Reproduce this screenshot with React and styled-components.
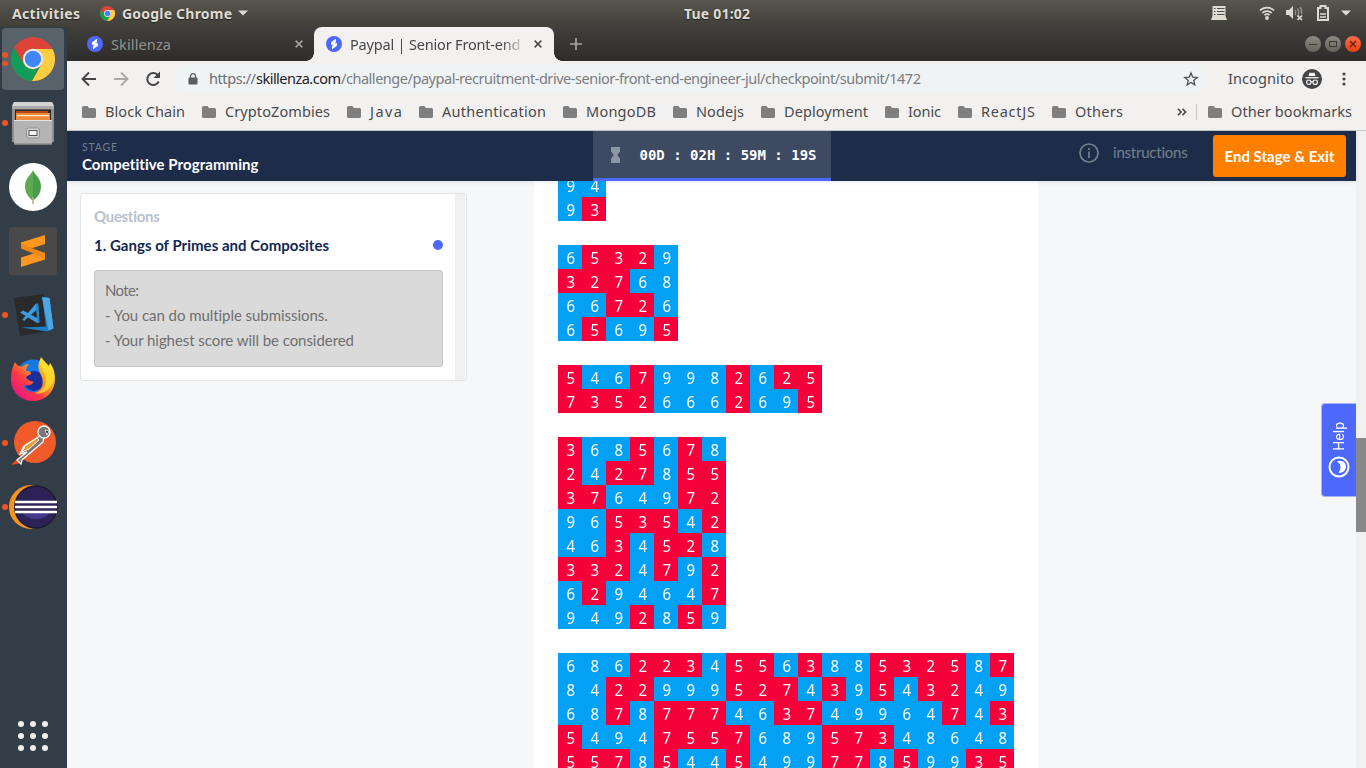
import React, { useLayoutEffect, useRef } from "react";
import styled, { createGlobalStyle, css } from "styled-components";

const Global = createGlobalStyle`
  * { box-sizing: border-box; }
  html, body { margin: 0; height: 100%; overflow: hidden; }
  body { font-family: "Noto Sans", "Open Sans", sans-serif; }
`;

const ui = `"Noto Sans", "Open Sans", sans-serif`;
const rounded = `Lato, "Noto Sans", sans-serif`;

/* ---------- text that spreads over a set measure ---------- */

const Measure = styled.span`
  display: block;
  flex: none;
  width: ${(p) => p.$w}px;
  white-space: nowrap;
  font-family: ${(p) => p.$font || ui};
  font-size: ${(p) => p.$size || 14.5}px;
  font-weight: ${(p) => p.$weight || 400};
  color: ${(p) => p.$color || "inherit"};
`;

function Label({ w, size, weight, color, font, children }) {
  const ref = useRef(null);
  useLayoutEffect(() => {
    const el = ref.current;
    el.style.letterSpacing = "0px";
    const natural = el.getBoundingClientRect().width;
    el.style.letterSpacing = `${(w - natural) / Math.max(1, children.length - 1)}px`;
  }, [w, children]);
  return (
    <Measure $w={w} $size={size} $weight={weight} $color={color} $font={font}>
      <span ref={ref}>{children}</span>
    </Measure>
  );
}

/* ---------- desktop ---------- */

const Desktop = styled.div`
  width: 1366px;
  height: 768px;
  display: flex;
  flex-direction: column;
  overflow: hidden;
`;

const TopBar = styled.header`
  height: 27px;
  flex: none;
  display: flex;
  align-items: center;
  padding: 0 15px 1px 12px;
  color: #dfdbd2;
  text-shadow: 0 1px 1px rgba(0, 0, 0, 0.6);
  background: linear-gradient(#59564d, #403f39);
  svg { flex: none; }
`;

const AppMenu = styled.div`
  display: flex;
  align-items: center;
  margin-left: 20px;
  width: 584px;
`;

const Tray = styled.div`
  margin-left: auto;
  display: flex;
  align-items: center;
`;

const Body = styled.div`
  flex: 1;
  min-height: 0;
  display: flex;
`;

const Dock = styled.nav`
  width: 67px;
  flex: none;
  display: flex;
  flex-direction: column;
  background: #333d47;
`;

const DockItem = styled.div`
  height: 64px;
  width: 67px;
  padding: 1px 3px 1px 2px;
  display: grid;
  position: relative;
`;

const Tile = styled.div`
  display: grid;
  place-items: center;
  height: 62px;
  width: 62px;
  border-radius: 4px;
  background: ${(p) => (p.$active ? "#58626b" : "transparent")};
`;

const Marks = styled.div`
  position: absolute;
  left: 2px;
  top: 0;
  height: 64px;
  display: flex;
  flex-direction: column;
  justify-content: center;
  gap: 3px;
  i {
    width: 5.500px;
    height: 5.500px;
    border-radius: 50%;
    background: #e95420;
  }
`;

const AppsGrid = styled.div`
  margin: auto 0 17px 18px;
  display: grid;
  grid-template-columns: repeat(3, 6px);
  gap: 6px;
  i {
    height: 6px;
    border-radius: 50%;
    background: #eeeeec;
  }
`;

/* ---------- browser ---------- */

const Browser = styled.div`
  flex: 1;
  min-width: 0;
  display: flex;
  flex-direction: column;
`;

const TabStrip = styled.div`
  height: 34px;
  flex: none;
  display: flex;
  align-items: center;
  background: linear-gradient(#3f3e3b, #2e2d2c);
`;

const Tab = styled.div`
  height: 34px;
  display: flex;
  align-items: center;
  position: relative;
  padding-bottom: 1px;
  width: ${(p) => (p.$active ? 240 : 247)}px;
  padding-left: ${(p) => (p.$active ? 12 : 20)}px;
  color: ${(p) => (p.$active ? "#47474a" : "#93918d")};
  ${(p) =>
    p.$active &&
    css`
      background: #f2f1f0;
      border-radius: 8px 8px 0 0;
      &::before, &::after {
        content: "";
        position: absolute;
        bottom: 0;
        width: 8px;
        height: 8px;
      }
      &::before {
        left: -8px;
        background: radial-gradient(circle at 0 0, transparent 7.5px, #f2f1f0 8px);
      }
      &::after {
        right: -8px;
        background: radial-gradient(circle at 100% 0, transparent 7.5px, #f2f1f0 8px);
      }
    `}
`;

const TabTitle = styled.div`
  width: ${(p) => p.$w}px;
  margin-left: 8px;
  overflow: hidden;
  ${(p) => p.$fade && "mask-image: linear-gradient(90deg, #000 86%, transparent);"}
`;

const WindowButtons = styled.div`
  margin-left: auto;
  margin-right: 5px;
  display: flex;
  gap: 4px;
`;

const RoundButton = styled.div`
  width: 16px;
  height: 16px;
  border-radius: 50%;
  display: grid;
  place-items: center;
  background: ${(p) => (p.$close ? "linear-gradient(#fa6c4c, #ec3f0b)" : "linear-gradient(#8b8a80, #64635c)")};
`;

const Toolbar = styled.div`
  height: 36px;
  flex: none;
  display: flex;
  align-items: center;
  background: #f2f1f0;
  padding-left: 14px;
  svg { flex: none; }
`;

const Omnibox = styled.div`
  margin-left: 13px;
  width: 1034px;
  height: 28px;
  border-radius: 14px;
  background: #eff3f4;
  display: flex;
  align-items: center;
  padding: 0 0 1px 14px;
  > span { padding-bottom: 2px; }
`;

const Profile = styled.div`
  display: flex;
  align-items: center;
  gap: 8px;
  margin-left: 20px;
  > span { padding-bottom: 2px; }
`;

const Bookmarks = styled.div`
  height: 34px;
  flex: none;
  display: flex;
  align-items: center;
  background: #f2f1f0;
  border-bottom: 1px solid #c9cac5;
  padding: 0 0 4px 15px;
  color: #4a4a4c;
  svg { flex: none; }
`;

const Bookmark = styled.div`
  flex: none;
  display: flex;
  align-items: center;
  gap: 9px;
  margin-right: 17px;
  > span { padding-bottom: 2px; }
`;

const Divider = styled.div`
  flex: none;
  width: 1px;
  height: 16px;
  margin: 0 11px 0 9px;
  background: #c8c7c5;
`;

/* ---------- page ---------- */

const Viewport = styled.div`
  flex: 1;
  min-height: 0;
  display: flex;
  position: relative;
`;

const Page = styled.div`
  width: 1289px;
  display: flex;
  flex-direction: column;
  background: #f6f7f9;
`;

const Scrollbar = styled.div`
  width: 10px;
  background: #f1f1f1;
  padding-top: 307px;
`;

const Thumb = styled.div`
  height: 94px;
  background: #888;
`;

const StageBar = styled.div`
  height: 50px;
  flex: none;
  display: flex;
  background: #1c2c49;
  box-shadow: 0 1px 4px rgba(28, 44, 73, 0.12);
  z-index: 1;
`;

const StageName = styled.div`
  width: 526px;
  padding: 9px 0 0 15px;
  line-height: 14px;
  > :last-child { line-height: 20px; }
`;

const Timer = styled.div`
  width: 238px;
  height: 50px;
  display: flex;
  align-items: center;
  padding-left: 18px;
  background: #3e4a62;
  border-bottom: 3px solid #4d69fb;
  font: bold 14px "DejaVu Sans Mono", monospace;
  color: #fff;
  white-space: pre;
  svg { margin-right: 19.500px; }
`;

const Instructions = styled.div`
  display: flex;
  align-items: center;
  gap: 14px;
  margin-left: 248px;
  padding-bottom: 7px;
  > span { padding-bottom: 2px; }
`;

const EndButton = styled.div`
  margin: 4px 10px 0 auto;
  width: 133px;
  height: 42px;
  border-radius: 3px;
  display: grid;
  place-items: center;
  background: #ff8000;
  > span { padding-bottom: 1px; }
`;

const Columns = styled.div`
  flex: 1;
  min-height: 0;
  display: flex;
  align-items: flex-start;
`;

const Questions = styled.aside`
  margin: 12px 0 0 13px;
  width: 387px;
  height: 188px;
  display: flex;
  background: #fff;
  border: 1px solid #e2e3e5;
  border-radius: 3px;
`;

const QuestionList = styled.div`
  width: 374px;
  padding: 10px 12px 0 13px;
`;

const InnerTrack = styled.div`
  width: 10px;
  background: #f0f0f0;
`;

const QuestionRow = styled.div`
  height: 28px;
  display: flex;
  align-items: center;
  justify-content: space-between;
  padding-bottom: ${(p) => p.$lift || 0}px;
`;

const StatusDot = styled.i`
  width: 10px;
  height: 10px;
  border-radius: 50%;
  background: #4d69fb;
`;

const Note = styled.div`
  margin-top: 10px;
  width: 349px;
  height: 97px;
  padding: 7px 10px;
  line-height: 25px;
  color: #6f6f6f;
  background: #dadada;
  border: 1px solid #c6c6c6;
  border-radius: 3px;
`;

const Statement = styled.main`
  margin-left: 67px;
  width: 504px;
  height: 587px;
  padding-left: 24px;
  background: #fff;
  overflow: hidden;
`;

const Grids = styled.div`
  margin-top: -8px;
  display: flex;
  flex-direction: column;
  gap: 24px;
`;

const Grid = styled.div`
  display: grid;
  grid-template-columns: repeat(${(p) => p.$cols}, 24px);
  grid-auto-rows: 24px;
`;

const Cell = styled.div`
  background: ${(p) => (p.$prime ? "#f50039" : "#03a1f5")};
  color: #fff;
  font: 16.500px/26px "Noto Sans", sans-serif;
  text-align: center;
  padding-left: 1px;
`;

const Digit = styled.span`
  display: inline-block;
  transform: scaleX(0.91);
`;

const Help = styled.div`
  position: absolute;
  right: 10px;
  top: 272px;
  width: 35px;
  height: 94px;
  border: 1px solid #a9b6fa;
  border-right: 0;
  border-radius: 4px 0 0 4px;
  background: #4d69fb;
  display: flex;
  flex-direction: column;
  align-items: center;
  justify-content: center;
  gap: 6px;
  color: #fff;
`;

const VerticalText = styled.span`
  writing-mode: vertical-rl;
  transform: rotate(180deg);
  font: 14px/18px Roboto, sans-serif;
`;

/* ---------- icons ---------- */

const ChromeLogo = ({ s }) => (
  <svg width={s} height={s} viewBox="0 0 44 44">
    <circle cx="22" cy="22" r="22" fill="#db4437" />
    <path d="M3 11A22 22 0 0 0 21 44l9.500-17A10 10 0 0 1 13 27z" fill="#0f9d58" />
    <path d="M22 12h19.600A22 22 0 0 1 21 44l9.800-17.200A10 10 0 0 0 22 12z" fill="#ffcd40" />
    <circle cx="22" cy="22" r="10.200" fill="#f1f1f1" />
    <circle cx="22" cy="22" r="8.200" fill="#4285f4" />
  </svg>
);

const Cabinet = () => (
  <svg width="44" height="46" viewBox="0 0 44 46">
    <path d="M3 2h38l2 4v36H1V6z" fill="#8f8f8f" />
    <path d="M3 2h38l2 4H1z" fill="#d4d4d4" />
    <path d="M1 6h42v3H1z" fill="#aaa" />
    <rect x="4" y="9.500" width="36" height="12" fill="#2c2723" />
    <rect x="5" y="11" width="32" height="4" fill="#b5481c" />
    <rect x="5" y="13" width="34" height="7" fill="#ec8a38" />
    <rect x="6" y="15" width="32" height="1.200" fill="#ffe7c8" />
    <path d="M3 20h38v24.500H3z" fill="#b4b4b4" />
    <path d="M3 20h38v1H3z" fill="#e3e3e3" />
    <path d="M3 43.500h38v1H3z" fill="#7c7c7c" />
    <rect x="15.500" y="28" width="13" height="10" rx="2" fill="#d6d6d6" stroke="#8e8e8e" />
    <rect x="18" y="30.500" width="8" height="5" fill="#f4f4f4" stroke="#505050" />
  </svg>
);

const Mongo = () => (
  <svg width="48" height="48" viewBox="0 0 48 48">
    <circle cx="24" cy="24" r="24" fill="#fff" />
    <path d="M24 7c1 4 8 8 8 16 0 8-4 11-7.500 14.500L24 36z" fill="#499d4a" />
    <path d="M24 7c-1 4-8 8-8 16 0 8 4 11 7.500 14.500L24 36z" fill="#5faa4f" />
    <path d="M24 34v7" stroke="#b9a88a" strokeWidth="1.500" />
  </svg>
);

const Sublime = () => (
  <svg width="48" height="48" viewBox="0 0 48 48">
    <rect width="48" height="48" rx="3" fill="#494949" />
    <path d="M12 15.500L36 8v9L22 21.500 36 26v6.500L12 40v-9.500L26 26l-14-4.500z" fill="#ff9820" />
    <path d="M12 21.500v-5L36 26v6z" fill="#e98310" opacity=".75" />
  </svg>
);

const Code = () => (
  <svg width="44" height="44" viewBox="0 0 44 44">
    <path d="M3 5L33 1l6 37-30 5z" fill="#2b2a2b" />
    <path d="M31 4l7.500 1 4 30.500-6.500 3-26-4 25-1z" fill="#1f7fc4" />
    <path d="M31 4l7.500 1 4 30.500-5 2z" fill="#4ea6e4" />
    <path d="M9 19.500l3-2 15 8v5zM11.500 26.500L24.500 11l2.500-.5v5L13 28z" fill="#3a9be0" />
    <path d="M24.500 10.500l3 1 1 18-2 .5z" fill="#2688cc" />
  </svg>
);

const Firefox = () => (
  <svg width="46" height="46" viewBox="0 0 46 46">
    <defs>
      <linearGradient id="fox" x1="1" y1="0" x2="0.100" y2="0.900">
        <stop offset="0.150" stopColor="#ffe226" />
        <stop offset="0.450" stopColor="#ff9322" />
        <stop offset="0.700" stopColor="#ff3647" />
        <stop offset="1" stopColor="#e31587" />
      </linearGradient>
    </defs>
    <circle cx="23" cy="20" r="16.500" fill="#1478e6" />
    <circle cx="24" cy="25" r="10" fill="#1a2f9c" />
    <path d="M5 6c-4 8-4 14-4 19 1 12 10 20 22 20 13 0 22-10 22-22 0-9-3-13-5-16l-1 3-8-8c-4 7-3 11 0 17 5 11-2 18-9 17-6-1-9-4-8-7 3 1 6 1 9-2 1-1 0-2-3-2l-4-3c0-2 3-3 5-4 0-3-3-3-5-3 0-3 1-4 3-7-3 0-5 1-7 3-2-1-5-1-7-5z" fill="url(#fox)" />
    <path d="M31 1c-4 8 4 14 5 21 1 8-5 14-12 15 9 2 17-4 19-11 2-8-1-15-3-19l-1 4z" fill="#ffe032" opacity=".8" />
  </svg>
);

const Postman = () => (
  <svg width="48" height="48" viewBox="0 0 48 48">
    <circle cx="26" cy="23" r="21" fill="#f15a29" />
    <path d="M2 46l8-8 3 6z" fill="#e6491d" />
    <path d="M34 15L15 27l-4 8 7-2-10 8 4 4 1-4 21-18 1-6z" fill="#777" stroke="#f4f4f4" strokeWidth="1.400" />
    <path d="M28 19L16 27l-3 6 7-3 10-9z" fill="#f79a2d" stroke="#fff" strokeWidth="1" />
    <circle cx="35" cy="13" r="6" fill="#777" stroke="#f4f4f4" strokeWidth="1.400" />
    <path d="M36 11l4 1-2 4z" fill="#222" stroke="#fff" strokeWidth=".8" />
  </svg>
);

const Eclipse = () => (
  <svg width="50" height="46" viewBox="0 0 50 46">
    <ellipse cx="23" cy="23" rx="22" ry="22" fill="#f7941e" />
    <circle cx="28" cy="23" r="22" fill="#333d47" />
    <circle cx="28" cy="23" r="21" fill="#2c2255" stroke="#16131f" strokeWidth="1" />
    <path d="M14 28a15 11 0 0 0 28 0z" fill="#463a8c" />
    <path d="M7 18h42M7 23h42M7 28h42" stroke="#fff" strokeWidth="2.400" />
  </svg>
);

const SiteIcon = () => (
  <svg width="16" height="16" viewBox="0 0 16 16" style={{ flex: "none" }}>
    <circle cx="8" cy="8" r="8" fill="#4d69fb" />
    <path d="M10 2.800L5 6.300v2.500h2.600L6 10v3.200l5-3.500V7.200H8.400L10 6z" fill="#fff" />
  </svg>
);

const Cross = ({ c }) => (
  <svg width="8" height="8" viewBox="0 0 8 8">
    <path d="M.6.6l6.800 6.800M7.400.6L.6 7.400" stroke={c} strokeWidth="1.500" />
  </svg>
);

const Folder = () => (
  <svg width="14" height="12" viewBox="0 0 14 12">
    <path d="M1.500 0H5.500L7 2h5.500Q14 2 14 3.500v7Q14 12 12.500 12h-11Q0 12 0 10.500v-9Q0 0 1.500 0z" fill="#7f7f7f" />
  </svg>
);

const Down = () => (
  <svg width="10" height="6" viewBox="0 0 10 6">
    <path d="M0 .5h10L5 5.500z" fill="#dfdbd2" />
  </svg>
);

const TrayIcons = () => (
  <Tray>
    <svg width="16" height="14" viewBox="0 0 16 14">
      <path d="M1.500 0h13v10L16 14H0l1.500-4z" fill="#dfdbd2" />
      <path d="M3 2.500h1.500M6 2.500h7.500M3 5.500h1.500M6 5.500h7.500M3 8.500h1.500M6 8.500h7.500" stroke="#504e46" strokeWidth="1.100" />
    </svg>
    <svg width="16" height="14" viewBox="0 0 16 14" style={{ marginLeft: 32 }}>
      <g fill="none" stroke="#dfdbd2" strokeWidth="1.700">
        <path d="M1 4.500a10 10 0 0 1 14 0M3.300 7a6.800 6.800 0 0 1 9.400 0M5.500 9.200a3.500 3.500 0 0 1 5 0" />
      </g>
      <circle cx="8" cy="12" r="1.900" fill="#dfdbd2" />
    </svg>
    <svg width="18" height="16" viewBox="0 0 18 16" style={{ marginLeft: 11 }}>
      <path d="M0 5h3l4-4v13l-4-4H0z" fill="#dfdbd2" />
      <path d="M9 5q1.500 2.500 0 5M11.500 3.500q2.500 4 0 8M14 2q2.500 3 1.500 7" stroke="#8f8c82" strokeWidth="1.500" fill="none" />
      <path d="M11.500 10.500l4.500 4.500M16 10.500L11.500 15" stroke="#dfdbd2" strokeWidth="1.700" />
    </svg>
    <svg width="12" height="16" viewBox="0 0 12 16" style={{ marginLeft: 13 }}>
      <path d="M1 3h2.500V1h5v2H11v12H1z" fill="none" stroke="#dfdbd2" strokeWidth="2" />
      <path d="M3 9h6M3 12h6" stroke="#dfdbd2" strokeWidth="1.500" />
    </svg>
    <svg width="10" height="6" viewBox="0 0 10 6" style={{ marginLeft: 12 }}>
      <path d="M0 .5h10L5 5.500z" fill="#dfdbd2" />
    </svg>
  </Tray>
);

const NavIcons = () => (
  <>
    <svg width="16" height="16" viewBox="0 0 16 16">
      <path d="M15 8H2M8 1.500L1.500 8 8 14.500" fill="none" stroke="#454548" strokeWidth="1.900" />
    </svg>
    <svg width="16" height="16" viewBox="0 0 16 16" style={{ marginLeft: 16 }}>
      <path d="M1 8h13M8 1.500L14.500 8 8 14.500" fill="none" stroke="#aaa9a8" strokeWidth="1.900" />
    </svg>
    <svg width="16" height="16" viewBox="0 0 16 16" style={{ marginLeft: 16 }}>
      <path d="M13.700 10.500A6 6 0 1 1 12.500 3.800L14 5.500" fill="none" stroke="#454548" strokeWidth="2" />
      <path d="M15 .5V7H8.500z" fill="#454548" />
    </svg>
  </>
);

const Lock = () => (
  <svg width="10" height="12" viewBox="0 0 10 12">
    <rect x=".5" y="4.500" width="9" height="7" rx="1" fill="#5b5d62" />
    <path d="M2.500 5V3.200a2.500 2.500 0 0 1 5 0V5" fill="none" stroke="#5b5d62" strokeWidth="1.300" />
  </svg>
);

const Star = () => (
  <svg width="16" height="16" viewBox="0 0 16 16" style={{ marginLeft: 262 }}>
    <path d="M8 2l1.700 4.100 4.500.4-3.400 2.900 1 4.400L8 11.500l-3.800 2.300 1-4.400L1.800 6.500l4.500-.4z" fill="none" stroke="#4e5156" strokeWidth="1.300" />
  </svg>
);

const Spy = () => (
  <svg width="20" height="20" viewBox="0 0 20 20">
    <circle cx="10" cy="10" r="10" fill="#454547" />
    <path d="M6.500 7l1-3.500L10 4l2.500-.5 1 3.500z" fill="#f2f1f0" />
    <path d="M3.500 8.700h13" stroke="#f2f1f0" strokeWidth="1.300" />
    <g fill="none" stroke="#f2f1f0" strokeWidth="1.200">
      <circle cx="6.800" cy="13.200" r="2.200" />
      <circle cx="13.200" cy="13.200" r="2.200" />
      <path d="M9 13q1-.8 2 0" />
    </g>
  </svg>
);

/* ---------- data ---------- */

const dock = [
  { icon: <ChromeLogo s={44} />, marks: 2, active: true },
  { icon: <Cabinet />, marks: 1 },
  { icon: <Mongo />, marks: 0 },
  { icon: <Sublime />, marks: 0 },
  { icon: <Code />, marks: 1 },
  { icon: <Firefox />, marks: 0 },
  { icon: <Postman />, marks: 1 },
  { icon: <Eclipse />, marks: 1 },
];

const bookmarks = [
  ["Block Chain", 80],
  ["CryptoZombies", 105],
  ["Java", 32],
  ["Authentication", 104],
  ["MongoDB", 70],
  ["Nodejs", 48],
  ["Deployment", 84],
  ["Ionic", 33],
  ["ReactJS", 54],
  ["Others", 48],
];

const grids = [
  ["94", "93"],
  ["65329", "32768", "66726", "65695"],
  ["54679982625", "73526662695"],
  ["3685678", "2427855", "3764972", "9653542", "4634528", "3324792", "6294647", "9492859"],
  [
    "6862234556388532587",
    "8422999527439543249",
    "6878777463749964743",
    "5494755768957348648",
    "5578544549977859935",
  ],
];

const isPrime = (d) => "2357".includes(d);

export default function App() {
  return (
    <Desktop>
      <Global />
      <TopBar>
        <Label w={68} size={14} weight={700}>Activities</Label>
        <AppMenu>
          <ChromeLogo s={15} />
          <span style={{ width: 7 }} />
          <Label w={110} size={14} weight={700}>Google Chrome</Label>
          <span style={{ width: 6 }} />
          <Down />
        </AppMenu>
        <Label w={66} size={14} weight={700}>Tue 01:02</Label>
        <TrayIcons />
      </TopBar>
      <Body>
        <Dock>
          {dock.map((d, i) => (
            <DockItem key={i}>
              <Tile $active={d.active}>{d.icon}</Tile>
              <Marks>{Array.from({ length: d.marks }, (_, k) => <i key={k} />)}</Marks>
            </DockItem>
          ))}
          <AppsGrid>{Array.from({ length: 9 }, (_, k) => <i key={k} />)}</AppsGrid>
        </Dock>
        <Browser>
          <TabStrip>
            <Tab>
              <SiteIcon />
              <TabTitle $w={184}><Label w={60}>Skillenza</Label></TabTitle>
              <Cross c="#a5a39f" />
            </Tab>
            <Tab $active>
              <SiteIcon />
              <TabTitle $w={176} $fade><Label w={182}>Paypal | Senior Front-end E</Label></TabTitle>
              <span style={{ width: 8 }} />
              <Cross c="#4a4a4c" />
            </Tab>
            <svg width="12" height="12" viewBox="0 0 12 12" style={{ marginLeft: 16 }}>
              <path d="M6 0v12M0 6h12" stroke="#a9a7a3" strokeWidth="1.700" />
            </svg>
            <WindowButtons>
              <RoundButton>
                <svg width="8" height="8" viewBox="0 0 8 8"><path d="M0 4.500h8" stroke="#3a3935" /></svg>
              </RoundButton>
              <RoundButton>
                <svg width="8" height="8" viewBox="0 0 8 8"><rect x=".5" y="1.500" width="7" height="5" fill="none" stroke="#3a3935" /></svg>
              </RoundButton>
              <RoundButton $close>
                <svg width="8" height="8" viewBox="0 0 8 8"><path d="M1 1l6 6M7 1L1 7" stroke="#56200f" strokeWidth="1.300" /></svg>
              </RoundButton>
            </WindowButtons>
          </TabStrip>
          <Toolbar>
            <NavIcons />
            <Omnibox>
              <Lock />
              <span style={{ width: 11 }} />
              <Label w={47} color="#6d6f73">https://</Label>
              <Label w={85} color="#1f2023">skillenza.com</Label>
              <Label w={580} color="#7b7d81">/challenge/paypal-recruitment-drive-senior-front-end-engineer-jul/checkpoint/submit/1472</Label>
              <Star />
            </Omnibox>
            <Profile>
              <Label w={66} color="#4a4a4c">Incognito</Label>
              <Spy />
            </Profile>
            <svg width="4" height="14" viewBox="0 0 4 14" style={{ marginLeft: 20 }}>
              <g fill="#454547"><circle cx="2" cy="2" r="1.600" /><circle cx="2" cy="7" r="1.600" /><circle cx="2" cy="12" r="1.600" /></g>
            </svg>
          </Toolbar>
          <Bookmarks>
            {bookmarks.map(([name, w]) => (
              <Bookmark key={name}>
                <Folder />
                <Label w={w}>{name}</Label>
              </Bookmark>
            ))}
            <svg width="10" height="8" viewBox="0 0 10 8" style={{ marginLeft: 37 }}>
              <path d="M1 .8L4 4 1 7.200M5.500.8l3 3.200-3 3.200" fill="none" stroke="#454547" strokeWidth="1.600" />
            </svg>
            <Divider />
            <Bookmark>
              <Folder />
              <Label w={121}>Other bookmarks</Label>
            </Bookmark>
          </Bookmarks>
          <Viewport>
            <Page>
              <StageBar>
                <StageName>
                  <Label w={35} size={10.5} font={rounded} color="#75808f">STAGE</Label>
                  <Label w={177} size={15} weight={700} font={rounded} color="#fff">Competitive Programming</Label>
                </StageName>
                <Timer>
                  <svg width="9" height="16" viewBox="0 0 9 16">
                    <path d="M0 0h9v4.500L6.300 8 9 11.500V16H0v-4.500L2.700 8 0 4.500z" fill="#8d96a6" />
                  </svg>
                  00D : 02H : 59M : 19S
                </Timer>
                <Instructions>
                  <svg width="20" height="20" viewBox="0 0 20 20">
                    <circle cx="10" cy="10" r="9" fill="none" stroke="#75808f" strokeWidth="1.700" />
                    <path d="M10 8.500V15M10 5v2" stroke="#75808f" strokeWidth="1.700" />
                  </svg>
                  <Label w={75} size={15} font={rounded} color="#75808f">instructions</Label>
                </Instructions>
                <EndButton>
                  <Label w={110} size={15} weight={700} font={rounded} color="#fff">{"End Stage & Exit"}</Label>
                </EndButton>
              </StageBar>
              <Columns>
                <Questions>
                  <QuestionList>
                    <QuestionRow $lift={4}>
                      <Label w={66} size={15} weight={700} font={rounded} color="#b9c0d0">Questions</Label>
                    </QuestionRow>
                    <QuestionRow $lift={3}>
                      <Label w={235} size={15} weight={700} font={rounded} color="#142850">1. Gangs of Primes and Composites</Label>
                      <StatusDot />
                    </QuestionRow>
                    <Note>
                      <Label w={34} size={15} font={rounded}>Note:</Label>
                      <Label w={223} size={15} font={rounded}>- You can do multiple submissions.</Label>
                      <Label w={249} size={15} font={rounded}>- Your highest score will be considered</Label>
                    </Note>
                  </QuestionList>
                  <InnerTrack />
                </Questions>
                <Statement>
                  <Grids>
                    {grids.map((rows, g) => (
                      <Grid key={g} $cols={rows[0].length}>
                        {rows.join("").split("").map((d, i) => (
                          <Cell key={i} $prime={isPrime(d)}><Digit>{d}</Digit></Cell>
                        ))}
                      </Grid>
                    ))}
                  </Grids>
                </Statement>
              </Columns>
            </Page>
            <Scrollbar><Thumb /></Scrollbar>
            <Help>
              <VerticalText>Help</VerticalText>
              <svg width="22" height="22" viewBox="0 0 22 22">
                <circle cx="11" cy="11" r="9.500" fill="none" stroke="#fff" strokeWidth="2" />
                <path d="M9 5.500a6 6 0 1 1 1.500 11 7 7 0 0 0-1.500-11z" fill="#fff" />
              </svg>
            </Help>
          </Viewport>
        </Browser>
      </Body>
    </Desktop>
  );
}
